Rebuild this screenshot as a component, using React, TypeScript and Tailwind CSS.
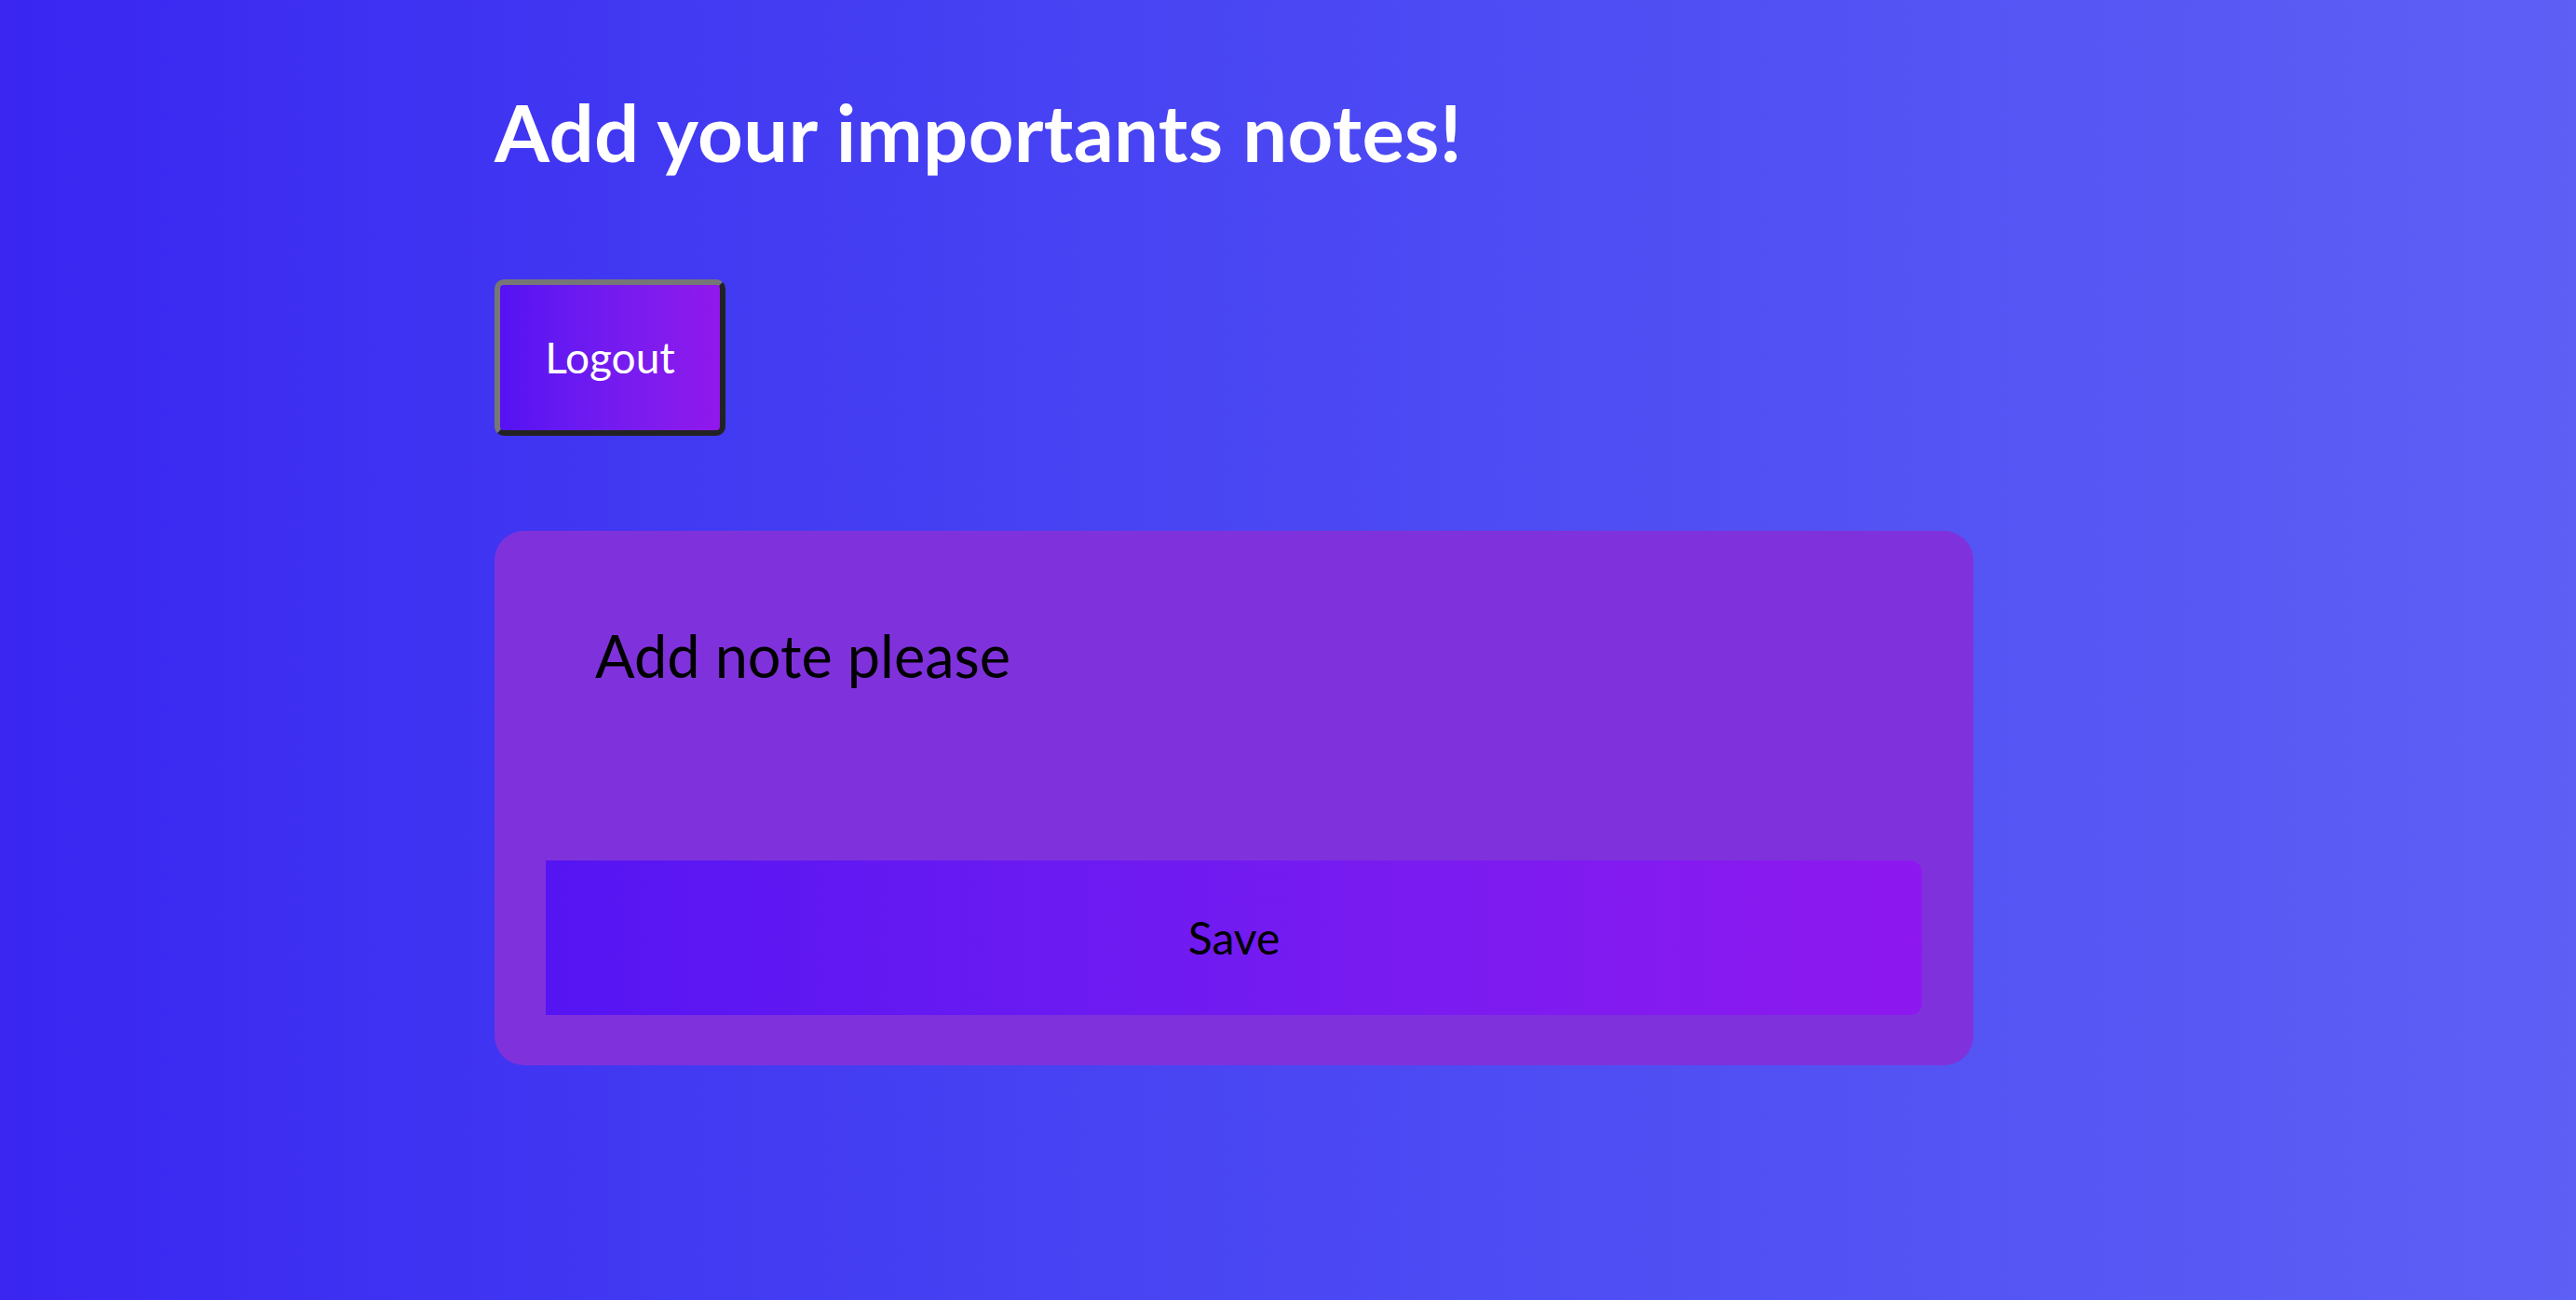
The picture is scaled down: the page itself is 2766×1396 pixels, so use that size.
import React, { useState } from 'react';

export default function App() {
  const [note, setNote] = useState('');

  return (
    <div
      className="min-h-screen w-full bg-linear-to-r from-[#3a25f1] to-[#5e5ff5] pl-[531px] pt-[99px]"
      style={{ fontFamily: 'Lato, "Open Sans", sans-serif' }}
    >
      <h1 className="text-[85px] font-bold leading-none tracking-[0.3px] text-white">Add your importants notes!</h1>

      <button
        className="mt-[116px] flex h-[168px] w-[248px] items-center justify-center rounded-[10px] border-[6px] border-t-[#767676] border-l-[#767676] border-r-[#222222] border-b-[#222222] bg-linear-to-r from-[#5512f3] to-[#9118ec] text-[46px] leading-none text-white"
      >
        Logout
      </button>

      {/* note card */}
      <div className="mt-[102px] flex w-[1588px] flex-col rounded-[32px] bg-[#7f32db] px-[55px] pt-[55px] pb-[54px]">
        <textarea
          value={note}
          onChange={(e) => setNote(e.target.value)}
          placeholder="Add note please"
          className="h-[299px] w-full resize-none border-0 bg-transparent pt-[41px] pl-[53px] text-[63px] leading-[1.2] text-black outline-none placeholder:text-black"
        />
        <button className="flex h-[166px] w-full items-center justify-center rounded-r-[13px] bg-linear-to-r from-[#5514f3] to-[#8e18ef] text-[48px] leading-none text-black">
          Save
        </button>
      </div>
    </div>
  );
}
